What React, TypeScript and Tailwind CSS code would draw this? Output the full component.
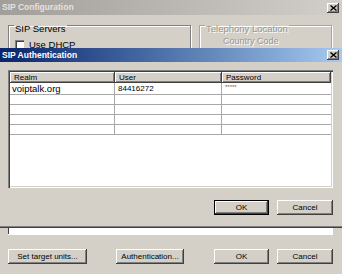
import React from "react";

const raised =
  "shadow-[inset_-1px_-1px_#404040,inset_1px_1px_#ffffff,inset_-2px_-2px_#808080,inset_2px_2px_#d4d0c8]";

const CloseButton = () => (
  <div className={`w-[12px] h-[10px] bg-[#d4d0c8] flex items-center justify-center ${raised}`}>
    <svg width="7" height="6" viewBox="0 0 7 6">
      <path d="M0.5 0.5 L6.5 5.5 M6.5 0.5 L0.5 5.5" stroke="#000" strokeWidth="1.4" />
    </svg>
  </div>
);

const WinButton = ({
  label,
  width,
  isDefault,
}: {
  label: string;
  width: string;
  isDefault?: boolean;
}) => (
  <div className={`${width} h-[15px] ${isDefault ? "border border-black" : ""}`}>
    <div className={`w-full h-full bg-[#d4d0c8] flex items-center justify-center text-[8px] text-black ${raised}`}>
      {label}
    </div>
  </div>
);

const rows = [
  { realm: "voiptalk.org", user: "84416272", password: "*****" },
  { realm: "", user: "", password: "" },
  { realm: "", user: "", password: "" },
  { realm: "", user: "", password: "" },
  { realm: "", user: "", password: "" },
];

const headerCell =
  "h-[11px] bg-[#d4d0c8] pl-[4px] flex items-center text-[8px] text-black shadow-[inset_-1px_-1px_#404040,inset_1px_1px_#ffffff,inset_-2px_-2px_#808080]";

export default function App() {
  return (
    <div className="w-[342px] h-[274px] overflow-hidden bg-[#d4d0c8] font-['Liberation_Sans',Arial,sans-serif] leading-none">
      {/* SIP Configuration (inactive window behind) */}
      <div className="h-[15px] flex items-center justify-between pl-[2px] pr-[3px] bg-gradient-to-r from-[#a29e9a] to-[#d2cec9]">
        <span className="font-bold text-[8.5px] text-[#e6e2de]">SIP Configuration</span>
        <CloseButton />
      </div>
      <div className="h-[33px] overflow-hidden flex pl-[8px] pt-[6px]">
        <fieldset className="w-[183px] h-[60px] border border-[#808080] shadow-[1px_1px_#ffffff,inset_1px_1px_#ffffff] px-[2px]">
          <legend className="relative top-[3px] ml-[3px] px-[1px] text-[9.5px] text-black">SIP Servers</legend>
          <div className="flex items-center gap-[5px] mt-[9px] ml-[4px]">
            <div className="w-[9px] h-[9px] bg-white shadow-[inset_1px_1px_#808080,inset_2px_2px_#404040]" />
            <span className="text-[9.5px] text-black">Use DHCP</span>
          </div>
        </fieldset>
        <fieldset className="ml-[8px] w-[133px] h-[60px] border border-[#a8a49f] shadow-[1px_1px_#ffffff,inset_1px_1px_#ffffff] px-[2px]">
          <legend className="relative top-[3px] ml-[3px] px-[1px] text-[9.5px] text-[#9a968f] [text-shadow:1px_1px_#ffffff]">
            Telephony Location
          </legend>
          <div className="pl-[21px] mt-[6px] text-[9px] text-[#9a968f] [text-shadow:1px_1px_#ffffff]">
            Country Code
          </div>
        </fieldset>
      </div>

      {/* SIP Authentication (active dialog) */}
      <div className="h-[14px] flex items-center justify-between pl-[2px] pr-[3px] bg-gradient-to-r from-[#0a246a] to-[#a6caf0]">
        <span className="font-bold text-[8.5px] text-white">SIP Authentication</span>
        <CloseButton />
      </div>
      <div className="h-[164px] pt-[8px] px-[8px] flex flex-col">
        <div className="w-[325px] h-[118px] bg-white p-[2px] shadow-[inset_1px_1px_#808080,inset_2px_2px_#404040,inset_-1px_-1px_#ffffff,inset_-2px_-2px_#d4d0c8]">
          <div className="flex">
            <div className={`${headerCell} w-[105px]`}>Realm</div>
            <div className={`${headerCell} w-[107px]`}>User</div>
            <div className={`${headerCell} w-[109px]`}>Password</div>
          </div>
          {rows.map((r, i) => (
            <div
              key={i}
              className={`flex border-b border-[#a8a8a8] ${i === 0 ? "h-[12px]" : "h-[10px]"}`}
            >
              <div className={`w-[105px] border-r border-[#a8a8a8] pl-[2px] flex items-center text-black ${i === 0 ? "text-[9.5px]" : "text-[8px]"}`}>
                {r.realm}
              </div>
              <div className="w-[107px] border-r border-[#a8a8a8] pl-[3px] flex items-center text-[8px] text-black">
                {r.user}
              </div>
              <div className="w-[109px] pl-[3px] flex items-start pt-[1px] text-[6px] text-[#666]">
                {r.password}
              </div>
            </div>
          ))}
        </div>
        <div className="flex justify-end gap-[8px] mt-[12px] pr-[1px]">
          <WinButton label="OK" width="w-[55px]" isDefault />
          <WinButton label="Cancel" width="w-[56px]" />
        </div>
      </div>
      <div className="h-[2px] border-t border-[#808080] border-b border-b-[#404040]" />

      {/* rest of SIP Configuration below the dialog */}
      <div className="mx-[8px] w-[325px] h-[6px] bg-white border-l border-[#404040] shadow-[0_1px_#ffffff]" />
      <div className="flex items-center mt-[15px] pl-[8px]">
        <WinButton label="Set target units..." width="w-[79px]" />
        <div className="ml-[29px]">
          <WinButton label="Authentication..." width="w-[68px]" />
        </div>
        <div className="ml-[30px]">
          <WinButton label="OK" width="w-[55px]" />
        </div>
        <div className="ml-[8px]">
          <WinButton label="Cancel" width="w-[56px]" />
        </div>
      </div>
    </div>
  );
}
